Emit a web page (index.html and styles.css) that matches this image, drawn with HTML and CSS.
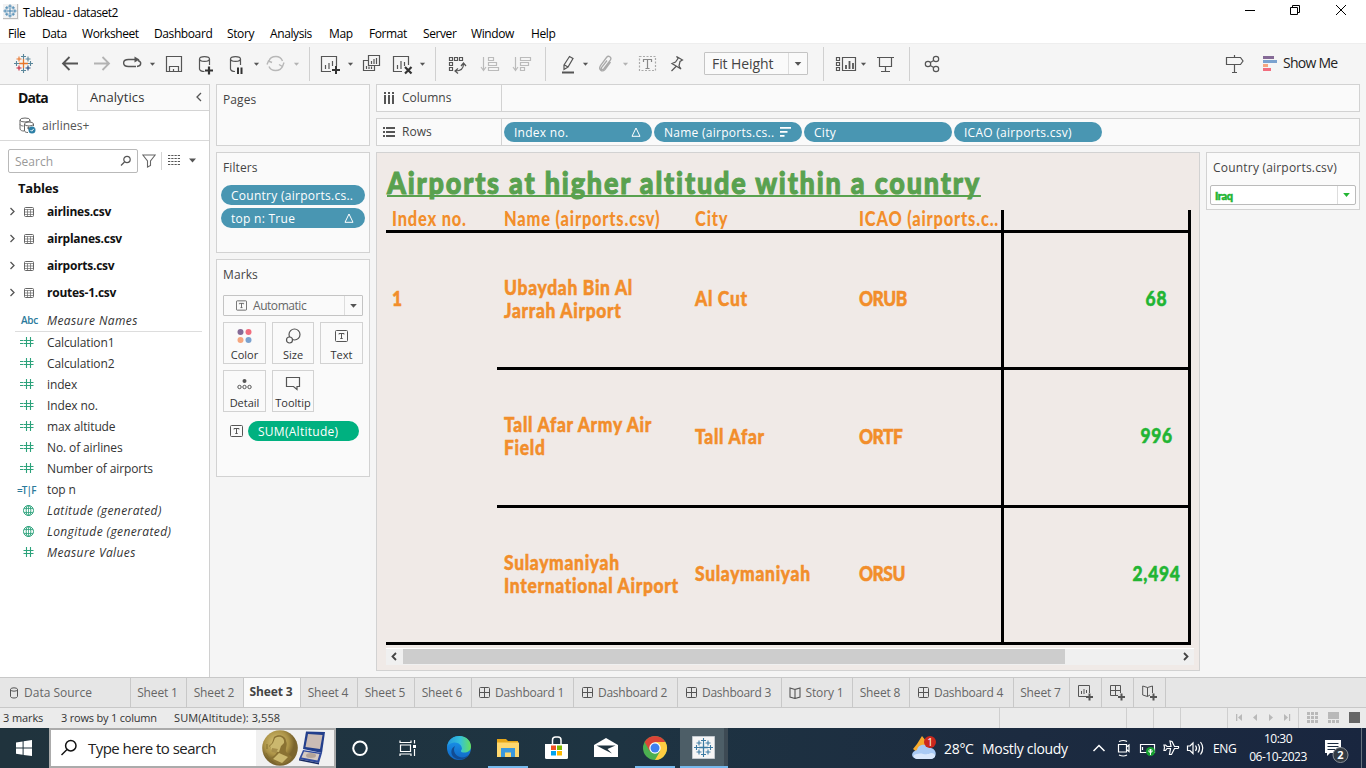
FILE: index.html
```html
<!DOCTYPE html>
<html lang="en">
<head>
<meta charset="utf-8">
<title>Tableau - dataset2</title>
<link rel="stylesheet" href="styles.css">
</head>
<body>
<svg class="defs" width="0" height="0">
  <defs>
    <g id="plus9" stroke-width="1.3"><path d="M0 -4.5V4.5M-4.5 0H4.5"/></g>
    <g id="plus5" stroke-width="1.1"><path d="M0 -2.5V2.5M-2.5 0H2.5"/></g>
    <g id="logo">
      <use href="#plus9"/><use href="#plus5" y="-7"/><use href="#plus5" y="7"/><use href="#plus5" x="-7"/><use href="#plus5" x="7"/>
      <use href="#plus5" x="-4.5" y="-4.5"/><use href="#plus5" x="4.5" y="-4.5"/><use href="#plus5" x="-4.5" y="4.5"/><use href="#plus5" x="4.5" y="4.5"/>
    </g>
    <g id="caret"><path d="M-2.6 -1.2H2.6L0 1.8Z"/></g>
    <g id="dash" fill="none" stroke="#555"><rect x=".5" y=".5" width="10" height="10" rx="1"/><path d="M5.5 .5V10.5M.5 5.5H10.5"/></g>
    <g id="tbl" fill="none" stroke="#666"><rect x=".5" y=".5" width="9" height="9" rx="1"/><path d="M.5 2.5H9.5M.5 5H9.5M.5 7.5H9.5M3.5 2.5V9.5M6.5 2.5V9.5" stroke-width=".7"/></g>
    <g id="hash" fill="none" stroke="#2ca27b" stroke-width="1.1"><path d="M3.5 0V10M7.500 0V10M.5 3.5H10.5M.5 6.500H10.500"/></g>
    <g id="globe" fill="none" stroke="#2ca27b"><circle cx="5.5" cy="5.5" r="5"/><ellipse cx="5.5" cy="5.5" rx="2.3" ry="5"/><path d="M1 3.5H10M1 7.5H10M5.5 .5V10.5" stroke-width=".8"/></g>
    <g id="tbox" fill="none" stroke="#555"><rect x=".5" y=".5" width="12" height="11" rx="1"/><path d="M4 4.5V3.5H9V4.5M6.5 3.5V8.5M5.3 8.5H7.7"/></g>
  </defs>
</svg>

<header class="titlebar">
  <svg class="app-icon" width="16" height="16" viewBox="0 0 16 16"><path fill="#f2f2f2" d="M0 0H16V16H0Z"/><path d="M14.500 0V15M0 14.500H15" stroke="#bbb"/><g stroke="#2e76a8" transform="translate(7 7) scale(.7)"><use href="#logo"/></g></svg>
  <span class="app-title">Tableau - dataset2</span>
  <svg class="winbtns" width="126" height="22" viewBox="1240 0 126 22" fill="none" stroke="#000"><path d="M1245 10.500H1255M1290.500 7.500H1297.500V14.500H1290.500ZM1292.500 7.500V5.500H1299.500V12.500H1297.500M1336 5L1346 15M1346 5L1336 15"/></svg>
</header>
<nav class="menubar">
  <span class="m-file">File</span><span class="m-data">Data</span><span class="m-work">Worksheet</span><span class="m-dash">Dashboard</span><span class="m-story">Story</span><span class="m-ana">Analysis</span><span class="m-map">Map</span><span class="m-fmt">Format</span><span class="m-srv">Server</span><span class="m-win">Window</span><span>Help</span>
</nav>

<div class="toolbar">
  <svg class="tb" width="703" height="41" viewBox="0 43 703 41" fill="none" stroke="#555" stroke-width="1.2">
    <g><use href="#plus9" x="23.500" y="63.500" stroke="#e8762c"/><g stroke="#5b879b"><use href="#plus5" x="23.500" y="56.500"/><use href="#plus5" x="23.500" y="70.500"/><use href="#plus5" x="16.500" y="63.500"/><use href="#plus5" x="30.500" y="63.500"/></g><g stroke-width="1.3"><use href="#plus5" x="19" y="59" stroke="#e8762c"/><use href="#plus5" x="28" y="59" stroke="#5b879b"/><use href="#plus5" x="19" y="68" stroke="#c72035"/><use href="#plus5" x="28" y="68" stroke="#1f447e"/></g></g>
    <path stroke="#d0d0d0" stroke-width="1" d="M47.500 47V81M309.500 47V81M435.500 47V81M545.500 47V81"/>
    <path stroke-width="1.8" d="M78 63.500H63M69.500 57L63 63.500L69.500 70"/>
    <path stroke-width="1.8" stroke="#b3b3b3" d="M94 63.500H109M102.500 57L109 63.500L102.500 70"/>
    <path stroke-width="1.4" d="M136 66.500H128.500C122 66.500 122 59.500 128.500 59.500H136M138 60.500C142 62 141.500 66 137 66.500"/><path d="M134.500 56.500L139.500 59.500L134.500 62.500Z" fill="#555" stroke="none"/>
    <path d="M166.500 56.500H181.500V71.500H166.500ZM169.500 71.500V66.500H178.500V71.500M173.500 71V69"/>
    <ellipse cx="204.500" cy="59" rx="5" ry="2.400"/><path d="M199.500 59V69C200 71 202 71.500 204.500 71.500M209.500 59V65"/>
    <path stroke="#333" stroke-width="2.2" d="M205 70.500H213M209 66.500V74.500"/>
    <ellipse cx="235.500" cy="59" rx="5" ry="2.400"/><path d="M230.500 59V69C231 71 232.500 71.500 235 71.500M240.500 59V65"/><path stroke="#333" stroke-width="2" d="M238 67.500V74M241.500 67.500V74"/>
    <path stroke="#b8b8b8" stroke-width="1.400" d="M269 61C270 57.500 273 56.500 276 56.500C279 56.500 281.500 58.500 282.500 61M267 64.500L268.500 61L272 62.500M282.500 66C281.500 69.500 278.500 70.500 275.500 70.500C272.500 70.500 270 69 269 66.500M284 62.500L282.500 66.500L279 64.500"/>
    <g fill="#555" stroke="none"><use href="#caret" x="152.500" y="64"/><use href="#caret" x="256.500" y="64"/><use href="#caret" x="296.500" y="64" fill="#b3b3b3"/><use href="#caret" x="350.500" y="64"/><use href="#caret" x="422.500" y="64"/><use href="#caret" x="585.500" y="64"/><use href="#caret" x="625.500" y="64" fill="#b3b3b3"/></g>
    <path d="M331 71.500H321.500V56.500H336.500V66M325.500 65V69M329 63V69M332.500 61V66"/><path stroke="#333" stroke-width="2" d="M332 70H340M336 66V74"/>
    <path d="M368.500 55.500H379.500V65.500H368.500ZM371.500 61V64M374 59V64M376.500 58V64M368 60.500H363.500V70.500H374.500V66M366.500 66V69M369 66.500V69M371.500 66.500V69"/>
    <path d="M402 71.500H393.500V56.500H408.500V65M397.500 65V69M401 61V69M404.500 62V66"/><path stroke="#333" stroke-width="2.200" d="M405 67L411.500 73.500M411.500 67L405 73.500"/>
    <path d="M449.500 57.500H452.500V60.500H449.500ZM454.500 57.500H457.500V60.500H454.500ZM459.500 57.500H462.500V60.500H459.500ZM449.500 62.500H452.500V65.500H449.500ZM449.500 67.500H452.500V70.500H449.500ZM455.500 71C461 71 463.500 68.500 463.500 64M461 66L463.500 63L466 66M458 68.500L455 71L458 73.500"/>
    <g stroke="#bbb"><path d="M483.500 57V70M481 67L483.500 70.500L486 67M488.500 57.500H493.500V60.500H488.500ZM488.500 62.500H496.500V65.500H488.500ZM488.500 67.500H498.500V70.500H488.500ZM515.500 57V70M513 67L515.500 70.500L518 67M520.500 57.500H530.500V60.500H520.500ZM520.500 62.500H528.500V65.500H520.500ZM520.500 67.500H524.500V70.500H520.500Z"/></g>
    <path d="M564 65L569.500 56.500L573 58.500L568 67L564 69.500ZM564.500 65L568 67"/><path stroke-width="2" d="M562 72.500H574"/>
    <path stroke="#aaa" stroke-width="1.300" d="M607 60.500L601.500 67.500C600.500 69.500 603 70 604 68.500L610.500 60C612 57 608.500 55 606.500 57.500L600.500 65.500C598 69.500 602 72.500 605 69.500L610.500 62"/>
    <rect x="639.500" y="56.500" width="16" height="14" stroke="#aaa" stroke-dasharray="2 1.500"/><path stroke="#888" d="M643.500 62V59.500H651.500V62M647.500 59.500V68.500M645.500 68.500H649.500"/>
    <path d="M676.500 56.500L682.500 60L680 61.500L679 66L681 69L672 63.500L675.500 62L678 58.500ZM676 66.500L671.500 71"/>
  </svg>
  <div class="combo fit"><span>Fit Height</span><svg width="19" height="21" viewBox="0 0 19 21"><path d="M6 9H13L9.500 13Z" fill="#555"/></svg></div>
  <svg class="tb tb2" width="130" height="41" viewBox="823 43 130 41" fill="none" stroke="#555" stroke-width="1.2">
    <path stroke="#d0d0d0" stroke-width="1" d="M823.500 47V81M909.500 47V81"/>
    <path d="M836.500 57.500H839.500V60.500H836.500ZM836.500 62.500H839.500V65.500H836.500ZM836.500 67.500H839.500V70.500H836.500ZM842.500 57.500H855.500V70.500H842.500Z"/><path stroke-width="1.800" d="M846 65V69M849.500 61V69M853 63V69"/>
    <use href="#caret" x="863.500" y="64" fill="#555" stroke="none"/>
    <path d="M877 57.500H894M879.500 57.500V66.500H891.500V57.500M885.500 66.500V71M881 71.500H890"/>
    <circle cx="928" cy="64" r="2.700"/><circle cx="936" cy="59" r="2.700"/><circle cx="936" cy="69" r="2.700"/><path d="M930.300 62.500L933.700 60.500M930.300 65.500L933.700 67.500"/>
  </svg>
  <svg class="signs" width="56" height="41" viewBox="1223 43 56 41" fill="none" stroke="#555" stroke-width="1.2"><path d="M1226.500 57.500H1240.500L1243 61L1240.500 64.500H1226.500ZM1234.500 55V57.500M1234.500 64.500V72M1232 72.500H1237"/><g stroke-width="3"><path stroke="#856a96" d="M1263 57.500H1274"/><path stroke="#7ba2cf" d="M1263 61.500H1277"/><path stroke="#f5a67f" d="M1263 65.500H1268"/><path stroke="#f26d7e" d="M1263 69.500H1271"/></g></svg>
  <span class="showme">Show Me</span>
</div>

<main class="work">
  <aside class="data">
    <div class="dtabs"><div class="dtab on">Data</div><div class="dtab off"><span>Analytics</span><svg width="8" height="12" viewBox="0 0 8 12" fill="none" stroke="#555" stroke-width="1.300"><path d="M6 1L2 5L6 9"/></svg></div></div>
    <div class="source">
      <svg width="18" height="17" viewBox="0 0 18 17" fill="none" stroke="#666"><ellipse cx="6" cy="3" rx="5" ry="2"/><path d="M1 3V12C1.500 13.500 3 14 5 14M11 3V5M1 7.500C1.500 8.500 3 9 4.500 9"/><ellipse cx="10" cy="7" rx="4.500" ry="2"/><path d="M5.500 7V14C6 15 7 15.500 9 15.500M14.500 7V9M8 11H11M9.500 9.500V12.500"/><circle cx="13" cy="13" r="3.500" fill="#2c7fa6" stroke="none"/><path stroke="#fff" d="M11.500 13L12.700 14.200L14.800 11.800"/></svg>
      <span>airlines+</span>
    </div>
    <div class="searchrow">
      <div class="search"><span>Search</span><svg width="12" height="12" viewBox="0 0 12 12" fill="none" stroke="#555" stroke-width="1.200"><circle cx="7" cy="4.500" r="3.200"/><path d="M4.500 7L1 10.500"/></svg></div>
      <svg width="14" height="14" viewBox="0 0 14 14" fill="none" stroke="#666" stroke-width="1.100"><path d="M.8 1H13.200L8.500 7V11.500L5.500 13V7Z"/></svg>
      <i class="vr"></i>
      <svg width="32" height="12" viewBox="0 0 32 12"><path stroke="#555" stroke-width="1.200" stroke-dasharray="2.250 1" d="M0 .5H12M0 3.500H12M0 6.500H12M0 9.500H12" fill="none"/><path d="M21 3.500H28L24.500 7.500Z" fill="#555"/></svg>
    </div>
    <h2>Tables</h2>
    <ul class="tables">
      <li><svg width="26" height="12" viewBox="0 0 26 12"><path d="M1.500 2L5 5.500L1.500 9" fill="none" stroke="#555" stroke-width="1.300"/><use href="#tbl" x="15" y="1"/></svg><span>airlines.csv</span></li>
      <li><svg width="26" height="12" viewBox="0 0 26 12"><path d="M1.500 2L5 5.500L1.500 9" fill="none" stroke="#555" stroke-width="1.300"/><use href="#tbl" x="15" y="1"/></svg><span>airplanes.csv</span></li>
      <li><svg width="26" height="12" viewBox="0 0 26 12"><path d="M1.500 2L5 5.500L1.500 9" fill="none" stroke="#555" stroke-width="1.300"/><use href="#tbl" x="15" y="1"/></svg><span>airports.csv</span></li>
      <li><svg width="26" height="12" viewBox="0 0 26 12"><path d="M1.500 2L5 5.500L1.500 9" fill="none" stroke="#555" stroke-width="1.300"/><use href="#tbl" x="15" y="1"/></svg><span>routes-1.csv</span></li>
    </ul>
    <div class="mnames"><b>Abc</b><em>Measure Names</em></div>
    <ul class="fields">
      <li><svg width="16" height="11"><path d="M1 3.500H4M1 6.500H4" stroke="#2ca27b"/><use href="#hash" x="4"/></svg><span>Calculation1</span></li>
      <li><svg width="16" height="11"><path d="M1 3.500H4M1 6.500H4" stroke="#2ca27b"/><use href="#hash" x="4"/></svg><span>Calculation2</span></li>
      <li><svg width="16" height="11"><path d="M1 3.500H4M1 6.500H4" stroke="#2ca27b"/><use href="#hash" x="4"/></svg><span>index</span></li>
      <li><svg width="16" height="11"><path d="M1 3.500H4M1 6.500H4" stroke="#2ca27b"/><use href="#hash" x="4"/></svg><span>Index no.</span></li>
      <li><svg width="16" height="11"><path d="M1 3.500H4M1 6.500H4" stroke="#2ca27b"/><use href="#hash" x="4"/></svg><span>max altitude</span></li>
      <li><svg width="16" height="11"><path d="M1 3.500H4M1 6.500H4" stroke="#2ca27b"/><use href="#hash" x="4"/></svg><span>No. of airlines</span></li>
      <li><svg width="16" height="11"><path d="M1 3.500H4M1 6.500H4" stroke="#2ca27b"/><use href="#hash" x="4"/></svg><span>Number of airports</span></li>
      <li><b class="tf">=T|F</b><span>top n</span></li>
      <li><svg width="16" height="11"><use href="#globe" x="4"/></svg><em>Latitude (generated)</em></li>
      <li><svg width="16" height="11"><use href="#globe" x="4"/></svg><em>Longitude (generated)</em></li>
      <li><svg width="16" height="11"><use href="#hash" x="4"/></svg><em>Measure Values</em></li>
    </ul>
  </aside>

  <section class="cards">
    <div class="card pages"><h3>Pages</h3></div>
    <div class="card filters"><h3>Filters</h3>
      <div class="pill"><span>Country (airports.cs..</span></div>
      <div class="pill"><span>top n: True</span><svg width="10" height="10" viewBox="0 0 10 10" fill="none" stroke="#fff"><path d="M5 1L9 9.300H1Z"/></svg></div>
    </div>
    <div class="card marks"><h3>Marks</h3>
      <div class="combo auto"><svg width="11" height="11" viewBox="0 0 13 12"><use href="#tbox"/></svg><span>Automatic</span><svg class="dd" width="18" height="19" viewBox="0 0 18 19"><path d="M5.500 8H12.500L9 12Z" fill="#555"/></svg></div>
      <div class="btns">
        <div class="btn"><svg width="16" height="16"><circle cx="3.500" cy="4" r="3" fill="#856a96"/><circle cx="11.500" cy="4" r="3" fill="#f26d7e"/><circle cx="3.500" cy="12" r="3" fill="#f5a67f"/><circle cx="11.500" cy="12" r="3" fill="#7ba2cf"/></svg><span>Color</span></div>
        <div class="btn"><svg width="16" height="16" fill="none" stroke="#555" stroke-width="1.200"><circle cx="9.500" cy="6.500" r="5.500"/><circle cx="4.500" cy="12" r="3" fill="#fafafa"/></svg><span>Size</span></div>
        <div class="btn"><svg width="16" height="16"><use href="#tbox" x="1" y="2"/></svg><span>Text</span></div>
        <div class="btn"><svg width="16" height="16" fill="none" stroke="#555"><circle cx="7.500" cy="5" r="2" fill="#555" stroke="none"/><circle cx="2.500" cy="11" r="1.700"/><circle cx="7.500" cy="11" r="1.700"/><circle cx="12.500" cy="11" r="1.700"/></svg><span>Detail</span></div>
        <div class="btn"><svg width="16" height="16" fill="none" stroke="#555" stroke-width="1.200"><path d="M1.500 1.500H14.500V10.500H12V13.500L8.500 10.500H1.500Z"/></svg><span>Tooltip</span></div>
      </div>
      <div class="sumrow"><svg width="13" height="12"><use href="#tbox"/></svg><div class="pill green"><span>SUM(Altitude)</span></div></div>
    </div>
  </section>

  <section class="sheet">
    <div class="shelf"><div class="shead"><svg width="12" height="12" fill="#555"><path d="M1 0H3V2H1ZM1 3H3V12H1ZM5 0H7V2H5ZM5 3H7V12H5ZM9 0H11V2H9ZM9 3H11V12H9Z"/></svg><span>Columns</span></div></div>
    <div class="shelf"><div class="shead"><svg width="12" height="12" fill="#555"><path d="M0 1H2V3H0ZM3 1H12V3H3ZM0 5H2V7H0ZM3 5H12V7H3ZM0 9H2V11H0ZM3 9H12V11H3Z"/></svg><span>Rows</span></div>
      <div class="pills">
        <div class="pill"><span>Index no.</span><svg width="10" height="10" viewBox="0 0 10 10" fill="none" stroke="#fff"><path d="M5 1L9 9.300H1Z"/></svg></div>
        <div class="pill"><span>Name (airports.cs..</span><svg width="12" height="11" fill="#fff"><path d="M1 0H12V1.800H1ZM1 4H8.500V5.800H1ZM1 8H5.500V9.800H1Z"/></svg></div>
        <div class="pill"><span>City</span></div>
        <div class="pill"><span>ICAO (airports.csv)</span></div>
      </div>
    </div>
    <div class="lower">
      <div class="view">
        <div class="titlewrap"><h1>Airports at higher altitude within a country</h1></div>
        <div class="grid">
          <div class="hd"><span>Index no.</span></div><div class="hd"><span>Name (airports.csv)</span></div><div class="hd"><span>City</span></div><div class="hd"><span>ICAO (airports.c..</span></div><div class="hd val"></div>
          <div class="idx"><span>1</span></div>
          <div class="c"><span>Ubaydah Bin Al<br>Jarrah Airport</span></div><div class="c"><span>Al Cut</span></div><div class="c"><span class="caps">ORUB</span></div><div class="c val"><span>68</span></div>
          <div class="c"><span>Tall Afar Army Air<br>Field</span></div><div class="c"><span>Tall Afar</span></div><div class="c"><span class="caps">ORTF</span></div><div class="c val"><span>996</span></div>
          <div class="c"><span>Sulaymaniyah<br>International Airport</span></div><div class="c"><span>Sulaymaniyah</span></div><div class="c"><span class="caps">ORSU</span></div><div class="c val"><span>2,494</span></div>
        </div>
        <div class="hscroll"><svg width="17" height="15" viewBox="0 0 17 15" fill="none" stroke="#444" stroke-width="1.800"><path d="M10 4L6.500 7.500L10 11"/></svg><i></i><svg width="17" height="15" viewBox="0 0 17 15" fill="none" stroke="#444" stroke-width="1.800"><path d="M7 4L10.500 7.500L7 11"/></svg></div>
      </div>
      <div class="quick">
        <h3>Country (airports.csv)</h3>
        <div class="qsel"><span>Iraq</span><svg width="18" height="18" viewBox="0 0 18 18"><path d="M5.500 7H12.500L9 11Z" fill="#22b533"/></svg></div>
      </div>
    </div>
  </section>
</main>

<div class="tabs">
  <div class="t t-ds"><svg width="10" height="12" fill="none" stroke="#555"><ellipse cx="5" cy="2.500" rx="3.500" ry="1.700"/><path d="M1.500 2.500V9.500C2 11.500 8 11.500 8.500 9.500V2.500"/></svg><span>Data Source</span></div>
  <div class="t w56">Sheet 1</div><div class="t w57">Sheet 2</div><div class="t w57 cur">Sheet 3</div><div class="t w57">Sheet 4</div><div class="t w57">Sheet 5</div><div class="t w57">Sheet 6</div>
  <div class="t w102"><svg width="11" height="11"><use href="#dash"/></svg>Dashboard 1</div>
  <div class="t w104"><svg width="11" height="11"><use href="#dash"/></svg>Dashboard 2</div>
  <div class="t w104"><svg width="11" height="11"><use href="#dash"/></svg>Dashboard 3</div>
  <div class="t w71"><svg width="12" height="12" fill="none" stroke="#555" stroke-width="1.100"><path d="M6 2.500L1 1V10L6 11.500L11 10V1L6 2.500V11.500"/></svg>Story 1</div>
  <div class="t w57">Sheet 8</div>
  <div class="t w104"><svg width="11" height="11"><use href="#dash"/></svg>Dashboard 4</div>
  <div class="t w56">Sheet 7</div>
  <div class="t w32"><svg width="16" height="16" fill="none" stroke="#555"><path d="M9 11.500H.5V.5H11.500V8M3.500 6V9M6 4V9M8.500 5V8"/><path stroke-width="2" d="M8 12H15M11.500 8.500V15.500"/></svg></div>
  <div class="t w32"><svg width="16" height="16" fill="none" stroke="#555"><path d="M8 10.500H.5V.5H10.500V8M5.500 .5V10.500M.5 5.500H10.500"/><path stroke-width="2" d="M8 12H15M11.500 8.500V15.500"/></svg></div>
  <div class="t w32"><svg width="16" height="16" fill="none" stroke="#555"><path d="M8 10L5.500 11.500L.7 10V1L5.500 2.500L10.500 1V8M5.500 2.500V11.500"/><path stroke-width="2" d="M8 12H15M11.500 8.500V15.500"/></svg></div>
</div>
<div class="status">
  <span class="s1">3 marks</span><span class="s2">3 rows by 1 column</span><span class="s3">SUM(Altitude): 3,558</span>
  <svg width="367" height="20" viewBox="999 708 367 20"><path d="M999.500 708V728M1126.500 708V728M1153.500 708V728M1180.500 708V728M1227.500 708V728M1298.500 708V728" stroke="#cfcfcf"/>
    <g fill="#b9b9b9"><path d="M1236 714H1237.300V721H1236ZM1242 714V721L1238 717.500ZM1257 714V721L1253 717.500ZM1269 714V721L1273 717.500ZM1284 714V721L1288 717.500ZM1289 714H1290.200V721H1289Z"/><path d="M1307 712H1310V715H1307ZM1311 712H1314V715H1311ZM1315 712H1318V715H1315ZM1307 716H1310V719H1307ZM1311 716H1314V719H1311ZM1315 716H1318V719H1315ZM1307 720H1310V723H1307ZM1311 720H1314V723H1311ZM1315 720H1318V723H1315ZM1328 712H1339V719H1328ZM1328 720H1331V723H1328ZM1332 720H1335V723H1332ZM1336 720H1339V723H1336Z"/></g><path fill="#666" d="M1349 712H1360V723H1349Z"/></svg>
</div>

<footer class="taskbar">
  <svg class="win" width="49" height="40" viewBox="728 728 49 40" fill="#fff"><g transform="translate(728 0)"><path d="M16 742.400L22.600 741.500V747.600H16ZM23.600 741.300L32 740V747.600H23.600ZM16 748.600H22.600V754.700L16 753.800ZM23.600 748.600H32V756L23.600 754.900Z"/></g></svg>
  <div class="tsearch"><svg width="18" height="18" viewBox="0 0 18 18" fill="none" stroke="#111" stroke-width="1.500"><circle cx="10.800" cy="6.700" r="5.200"/><path d="M7 10.500L1.500 16"/></svg><span>Type here to search</span>
    <svg class="medal" width="78" height="36" viewBox="256 730 78 36">
      <defs><radialGradient id="gold" cx=".4" cy=".35"><stop offset="0" stop-color="#d9c67a"/><stop offset=".7" stop-color="#ab9246"/><stop offset="1" stop-color="#7b652e"/></radialGradient></defs>
      <rect x="256" y="730" width="78" height="36" fill="#f0f0f0"/><circle cx="280" cy="748" r="17.800" fill="url(#gold)"/>
      <path d="M274 737C279 733 286 736 286 741C288 745 285 748 286 752L292 757C289 763 282 765 277 764L270 759L275 755L277 752H272L271 748L269 746L272 743Z" fill="#8a7233"/><path d="M275 738C280 735 285 738 284 743L281 746L279 752L272 751L270 746L273 743ZM279 753L288 757L282 763L273 759Z" fill="#cbb86e"/><path d="M272 748L278 749L276 753L272 752Z" fill="#a58d49"/><path d="M266 753L271 761M267 744V749" stroke="#84702f"/>
      <path d="M306 731.500L325 732L322 753L303 749Z" fill="#233f8c"/><path d="M308 734L322.500 735L320 749L305.500 747Z" fill="#cbbcb5"/><path d="M303 750L322 753L319 763L299 759Z" fill="#2f4a9e"/><path d="M304 751.500L319.500 754L317.500 760.500L301.500 757.500Z" fill="#d5cac2"/><ellipse cx="311" cy="755.500" rx="5" ry="2.500" fill="#b3a398"/><path d="M299 759L319 763V764.500L299 760.500Z" fill="#182a62"/>
    </svg>
  </div>
  <svg class="apps" width="404" height="40" viewBox="336 728 404 40">
    <defs><linearGradient id="eg" x1="0" y1="0" x2="1" y2="0"><stop offset="0" stop-color="#2297e0"/><stop offset=".55" stop-color="#35c1d9"/><stop offset="1" stop-color="#66e05a"/></linearGradient><linearGradient id="eb" x1="0" y1="0" x2="0" y2="1"><stop offset="0" stop-color="#1a9af0"/><stop offset="1" stop-color="#1166c4"/></linearGradient></defs>
    <circle cx="360" cy="748.300" r="6.800" fill="none" stroke="#fff" stroke-width="2"/>
    <g fill="none" stroke="#fff" stroke-width="1.200"><path d="M400 740.500V742.500H411V740.500M400 756V754H411V756M400.500 745H410.500V751.500H400.500ZM414.500 740V743.500M414.500 749V756"/></g><path d="M413 745H416V748H413Z" fill="#fff"/>
    <circle cx="459" cy="748" r="12" fill="url(#eb)"/><path d="M447 747C448 739 454 736 459.500 736C467 736 471 741.500 471 746.500C471 751 467 753 463 752.500C460 752 461 750 462 749C462 745 458 742 454 742.500C450 743 447.500 745 447 747Z" fill="url(#eg)"/><path d="M455 746C452 751 456 757 462 757.500C465 757.500 468 756 469 754.500C466 760 458 761 453.500 757C450 753 451 748 455 746Z" fill="#124c93"/>
    <path d="M497 739H506L508 741H518V757H497Z" fill="#e6a619"/><path d="M497 742.500H519V757H497Z" fill="#ffd86f"/><path d="M501 748H515V757H511V752.500H505V757H501Z" fill="#3b98dd"/>
    <path d="M545 744H568V757.500Q568 759 566.500 759H546.500Q545 759 545 757.500Z" fill="#fff"/><path d="M552.500 744V740Q552.500 737 555.500 737H558Q561 737 561 740V744" stroke="#fff" stroke-width="1.500" fill="none"/><path fill="#f25022" d="M551 745.500H556V750H551Z"/><path fill="#7fba00" d="M557 745.500H562V750H557Z"/><path fill="#00a4ef" d="M551 751H556V755.500H551Z"/><path fill="#ffb900" d="M557 751H562V755.500H557Z"/>
    <path fill="#fff" d="M594 745L606 738L618 745V757H594Z"/><path fill="#1f333f" d="M596.500 745.500H615.500L607.500 749L612 753.500L604 749.500Z"/>
    <circle cx="655" cy="748" r="12" fill="#4caf50"/><path d="M644.600 742A12 12 0 0 1 665.400 742H655L649.800 751Z" fill="#db4437"/><path d="M665.400 742A12 12 0 0 1 655 760L660.200 751L655 742Z" fill="#ffcd41"/><circle cx="655" cy="748" r="5.700" fill="#fff"/><circle cx="655" cy="748" r="4.500" fill="#3f7ff0"/>
    <path fill="#4d5e67" d="M680 728H724V766H680Z"/><path fill="#3d4a54" d="M724 728H728V766H724Z"/><path fill="#f6f6f6" stroke="#c2c9cf" d="M692.500 736.500H714.500V758.500H692.500Z"/><g transform="translate(703.500 747.500)" stroke="#3c7ba3"><use href="#logo" transform="scale(1)"/></g>
    <path fill="#76b9ed" d="M488 766H528V768H488ZM635 766H675V768H635ZM680 766H728V768H680Z"/>
  </svg>
  <svg class="wx" width="32" height="28" viewBox="910 734 32 28"><path d="M922 736L926 741L933 742L929 748L918 753L913 749L917 744Z" fill="#f6a92b"/><path d="M917 759C910 758 911 751 917 750C918 744 927 743 929 748C936 747 939 757 931 759Z" fill="#a9caf4"/><path d="M917 759C912 758 913 754 917 754C922 752 925 756 931 753C936 753 937 758 931 759Z" fill="#d9e8fc"/><circle cx="930" cy="742" r="6" fill="#c9281e"/><text x="930" y="745.500" text-anchor="middle" class="badge">1</text></svg>
  <span class="temp">28°C</span><span class="cloud">Mostly cloudy</span>
  <svg class="tray" width="116" height="40" viewBox="1090 728 116 40" fill="none" stroke="#fff" stroke-width="1.200">
    <path stroke-width="1.500" d="M1093.500 751L1099 745.500L1104.500 751"/>
    <path d="M1118.500 744.500H1126.500V752H1118.500ZM1126.500 747L1129 745V751.500L1126.500 749.500M1119 741.500Q1123.500 739.500 1127 741.500M1119 755Q1123.500 757 1127 755"/>
    <path d="M1142 744.500H1154.500V752.500H1140.500V744.500ZM1142.500 747V750"/><circle cx="1150.500" cy="751.500" r="4.500" fill="#16a030" stroke="none"/><path d="M1150.500 749V755M1149 750.500L1150.500 749L1152 750.500V752H1149Z" stroke-width="1"/>
    <path d="M1170 741L1172 741.500L1174.500 746.500H1178.500Q1179 748 1178 748.500H1174.500L1171.500 754.500H1169.500L1170.500 748.500H1167L1165.500 750.500H1164L1164.500 747.500L1164 745H1165.500L1167 746.500H1171Z"/>
    <path d="M1187.500 746H1190L1193 743V753.500L1190 750.500H1187.500ZM1195.500 745.500Q1197.500 748 1195.500 751M1198 744Q1201 748 1198 752.500M1200.500 742Q1205 748 1200.500 754.500"/>
  </svg>
  <span class="lang">ENG</span>
  <div class="clock"><span class="hm">10:30</span><span>06-10-2023</span></div>
  <svg class="notif" width="46" height="40" viewBox="1320 728 46 40"><path d="M1325 740H1341V753H1330L1327 756V753H1325Z" fill="#fff"/><path d="M1327.500 743.500H1338.500M1327.500 746.500H1338.500M1327.500 749.500H1335" stroke="#1b2b40"/><circle cx="1340.500" cy="755" r="7.500" fill="#333b43" stroke="#8a9097"/><text x="1340.500" y="759" text-anchor="middle" class="badge b2">2</text><path d="M1361.500 728V768" stroke="#66727d"/></svg>
</footer>
</body>
</html>
```
FILE: styles.css
```css
* { box-sizing: border-box; }
body { margin: 0; width: 1366px; height: 768px; overflow: hidden; background: #f5f5f5; font-family: "Open Sans", sans-serif; font-size: 12px; color: #333; display: flex; flex-direction: column; white-space: nowrap; }
h1, h2, h3, ul { margin: 0; padding: 0; list-style: none; }
svg { display: block; flex: none; }
.defs { height: 0; }

.titlebar { height: 23px; flex: none; background: #fff; display: flex; align-items: center; color: #000; }
.app-icon { margin: 1px 4px 0 3px; }
.app-title { letter-spacing: -0.45px; padding-top: 1px; }
.winbtns { margin-left: auto; align-self: flex-start; }
.menubar { height: 20px; flex: none; background: #fff; display: flex; align-items: center; color: #000; padding: 2px 0 0 8px; line-height: 18px; letter-spacing: -0.4px; }
.m-file { width: 34px; } .m-data { width: 40px; } .m-work { width: 72px; } .m-dash { width: 73px; } .m-story { width: 43px; }
.m-ana { width: 59px; } .m-map { width: 40px; } .m-fmt { width: 54px; } .m-srv { width: 48px; } .m-win { width: 60px; }

.toolbar { height: 41px; flex: none; display: flex; border-top: 1px solid #eee; }
.toolbar > svg { margin-top: -1px; }
.combo { display: flex; align-items: center; background: #fafafa; border: 1px solid #c4c4c4; border-radius: 1px; }
.fit { width: 104px; height: 23px; margin: 8px 0 0 1px; font-size: 14px; padding-left: 7px; color: #444; }
.fit span { padding-bottom: 1px; letter-spacing: -0.1px; }
.fit svg, .auto .dd { margin-left: auto; border-left: 1px solid #ddd; }
.tb2 { margin-left: 15px; }
.signs { margin-left: 270px; }
.showme { font-size: 14px; margin-left: 4px; line-height: 38px; letter-spacing: -0.75px; color: #222; }

.work { height: 593px; flex: none; display: flex; }
.data { width: 210px; background: #fff; border-right: 1px solid #d0d0d0; }
.dtabs { display: flex; height: 27px; }
.dtab { height: 27px; line-height: 25px; border-top: 1px solid #d4d4d4; }
.on { width: 77px; padding-left: 18px; font-size: 14px; font-weight: 700; color: #111; letter-spacing: -0.9px; }
.off { width: 132px; background: #fafafa; border-left: 1px solid #d4d4d4; border-bottom: 1px solid #d4d4d4; display: flex; align-items: center; justify-content: space-between; padding: 0 6px 0 12px; font-size: 13px; letter-spacing: 0.1px; }
.source { height: 30px; border-bottom: 1px solid #d9d9d9; display: flex; align-items: center; padding-left: 19px; gap: 5px; font-size: 12px; color: #555; }
.searchrow { display: flex; align-items: center; height: 24px; margin: 8px 0 0 8px; }
.search { width: 130px; height: 24px; border: 1px solid #b9b9b9; border-radius: 2px; display: flex; align-items: center; justify-content: space-between; padding: 0 5px 0 6px; color: #999; margin-right: 4px; }
.vr { width: 1px; height: 18px; background: #d4d4d4; margin: 0 6px 0 5px; }
h2 { font-size: 13px; line-height: 20px; margin: 5px 0 0 18px; letter-spacing: -0.2px; color: #111; }
.tables li { height: 27px; display: flex; align-items: center; padding-left: 9px; font-weight: 700; letter-spacing: -0.25px; color: #111; }
.tables span { margin-left: 12px; }
.mnames { height: 26px; margin: 0 7px 0 15px; padding-top: 3px; border-bottom: 1px solid #ddd; display: flex; align-items: center; }
.mnames b { width: 32px; padding-left: 6px; font-size: 10px; font-weight: 600; color: #2b7a9b; letter-spacing: -0.3px; }
.mnames em { letter-spacing: 0.4px; }
.fields li { height: 21px; display: flex; align-items: center; padding-left: 19px; letter-spacing: -0.12px; }
.fields span, .fields em { margin-left: 12px; }
.fields em { letter-spacing: 0.4px; }
.fields .tf { width: 20px; margin-left: -2px; font: 600 10px "Open Sans", sans-serif; color: #2b7a9b; letter-spacing: -0.9px; }
.fields .tf + span { margin-left: 10px; }

.cards { width: 160px; padding-left: 6px; display: flex; flex-direction: column; gap: 6px; }
.card { width: 154px; background: #fafafa; border: 1px solid #d2d2d2; padding: 6px 4px 0; }
h3 { font-size: 12px; font-weight: 400; line-height: 18px; padding-left: 2px; color: #444; letter-spacing: 0.1px; }
.pages { height: 62px; }
.filters { height: 101px; display: flex; flex-direction: column; gap: 3px; }
.filters h3 { margin-bottom: 5px; }
.marks { height: 218px; padding: 6px 6px 0; }
.marks h3 { padding-left: 0; }
.pill { height: 20px; border-radius: 10px; background: #4996b2; color: #fff; display: flex; align-items: center; justify-content: space-between; padding: 0 11px 0 10px; flex: none; line-height: 19px; letter-spacing: 0.27px; }
.auto { width: 140px; height: 21px; margin-top: 11px; padding-left: 12px; color: #666; gap: 6px; letter-spacing: -0.45px; }
.auto span { letter-spacing: -0.45px; }
.btns { display: grid; grid-template-columns: 43px 42px 43px; gap: 6px; margin-top: 6px; }
.btn { height: 42px; border: 1px solid #d2d2d2; display: flex; flex-direction: column; align-items: center; padding-top: 5px; font-size: 11px; line-height: 15px; }
.btn span { margin-top: 3px; }
.sumrow { display: flex; align-items: center; gap: 5px; margin: 9px 0 0 7px; }
.green { width: 111px; background: #00b180; }

.sheet { width: 996px; padding-left: 6px; display: flex; flex-direction: column; gap: 6px; }
.shelf { width: 984px; height: 28px; background: #fafafa; border: 1px solid #d2d2d2; display: flex; flex: none; }
.shead { width: 125px; border-right: 1px solid #d2d2d2; display: flex; align-items: center; gap: 7px; padding: 0 0 1px 6px; color: #444; }
.pills { display: flex; gap: 2px; padding: 3px 0 0 2px; }
.pills .pill { width: 148px; }
.lower { display: flex; gap: 6px; }
.view { width: 824px; height: 519px; background: #f0eae7; border: 1px solid #d2d2d2; padding-left: 9px; font-family: Lato, sans-serif; font-weight: 900; color: #f28e2b; -webkit-text-stroke: 0.5px; }
.titlewrap { height: 57px; padding-left: 1px; padding-top: 11px; }
h1 { display: inline-block; font-size: 30px; line-height: 36px; font-weight: 900; color: #59a14f; letter-spacing: 2px; transform-origin: 0 50%; transform: scaleX(0.9); text-decoration: underline; text-decoration-thickness: 2px; text-underline-offset: 1px; text-decoration-skip-ink: none; -webkit-text-stroke: 1px; }
.grid { width: 805px; height: 435px; display: grid; grid-template-columns: 111px 191px 164px 149px 190px; grid-template-rows: 23px 137px 138px 137px; font-size: 20px; line-height: 23px; }
.grid span { display: inline-block; transform: scaleX(0.87); transform-origin: 0 50%; letter-spacing: 0.8px; }
.grid .hd span { transform: scaleX(0.82); letter-spacing: 1px; -webkit-text-stroke: 0; }
.hd { border-bottom: 3px solid #000; padding-left: 7px; line-height: 17px; }
.hd:first-child { padding-left: 6px; }
.idx { grid-row: 2 / 5; padding: 54px 0 0 6px; border-bottom: 3px solid #000; }
.c { border-bottom: 3px solid #000; padding: 0 0 3px 7px; display: flex; align-items: center; }
.grid .caps { letter-spacing: -0.6px; }
.val { border-left: 3px solid #000; border-right: 3px solid #000; color: #22b533; }
.c.val { padding-left: 121px; justify-content: center; padding-bottom: 4px; }
.c.val span { transform-origin: 50% 50%; }
.hscroll { width: 808px; height: 17px; margin-top: 3px; background: #f0f0f0; border-top: 1px solid #fff; display: flex; }
.hscroll i { width: 662px; height: 15px; background: #cdcdcd; margin-right: 112px; }
.quick { width: 154px; height: 58px; background: #fafafa; border: 1px solid #d2d2d2; padding: 6px 3px 0; }
.quick h3 { padding-left: 3px; letter-spacing: 0.2px; }
.qsel { width: 146px; height: 20px; margin-top: 8px; border: 1px solid #bbb; border-radius: 2px; background: #fff; display: flex; align-items: center; justify-content: space-between; padding-left: 4px; font: 900 11px Lato, sans-serif; color: #22b533; letter-spacing: -0.4px; -webkit-text-stroke: 0.5px; }
.qsel svg { border-left: 1px solid #ddd; }

.tabs { height: 31px; flex: none; background: #e6e6e6; border-top: 1px solid #c8c8c8; border-bottom: 1px solid #c8c8c8; display: flex; color: #666; }
.t { border-right: 1px solid #c8c8c8; display: flex; align-items: center; justify-content: center; gap: 5px; padding-right: 2px; letter-spacing: -0.15px; }
.t-ds { width: 131px; justify-content: flex-start; padding-left: 9px; }
.t-ds span { letter-spacing: 0; }
.w56 { width: 56px; } .w57 { width: 57px; } .w102 { width: 102px; } .w104 { width: 104px; } .w71 { width: 71px; } .w32 { width: 32px; }
.w102, .w104 { letter-spacing: -0.25px; }
.w32 { padding-right: 0; }
.cur { background: #fafafa; color: #444; font-weight: 700; letter-spacing: -0.15px; padding-bottom: 2px; }
.status { height: 20px; flex: none; background: #ebebeb; display: flex; align-items: center; font-size: 11px; color: #333; padding-left: 3px; letter-spacing: -0.1px; }
.status span { padding-bottom: 1px; }
.s1 { width: 58px; } .s2 { width: 113px; letter-spacing: -0.2px; } .s3 { letter-spacing: 0.1px; }
.status svg { margin-left: auto; }

.taskbar { height: 40px; flex: none; background: linear-gradient(90deg, #20333d, #1e3442 45%, #1c2b40 75%, #19263f); display: flex; align-items: center; color: #fff; }
.tsearch { width: 287px; height: 40px; border: 2px solid #ababab; background: #fff; display: flex; align-items: center; padding-left: 9px; color: #222; font-size: 15px; letter-spacing: -0.53px; }
.tsearch span { margin-left: 10px; }
.medal { margin-left: auto; }
.wx { margin-left: 170px; }
.temp { margin-left: 2px; width: 38px; font-size: 14px; }
.cloud { width: 108px; font-size: 14px; }
.temp, .cloud { letter-spacing: -0.3px; }
.lang { width: 36px; margin-left: 7px; font-size: 12px; letter-spacing: -0.3px; }
.clock { width: 58px; font-size: 12px; line-height: 18px; display: flex; flex-direction: column; align-items: center; letter-spacing: -0.5px; }
.notif { margin-left: auto; }
.badge { font: 10px "Open Sans", sans-serif; fill: #fff; stroke: none; }
.b2 { font-weight: 700; font-size: 11px; }
```
